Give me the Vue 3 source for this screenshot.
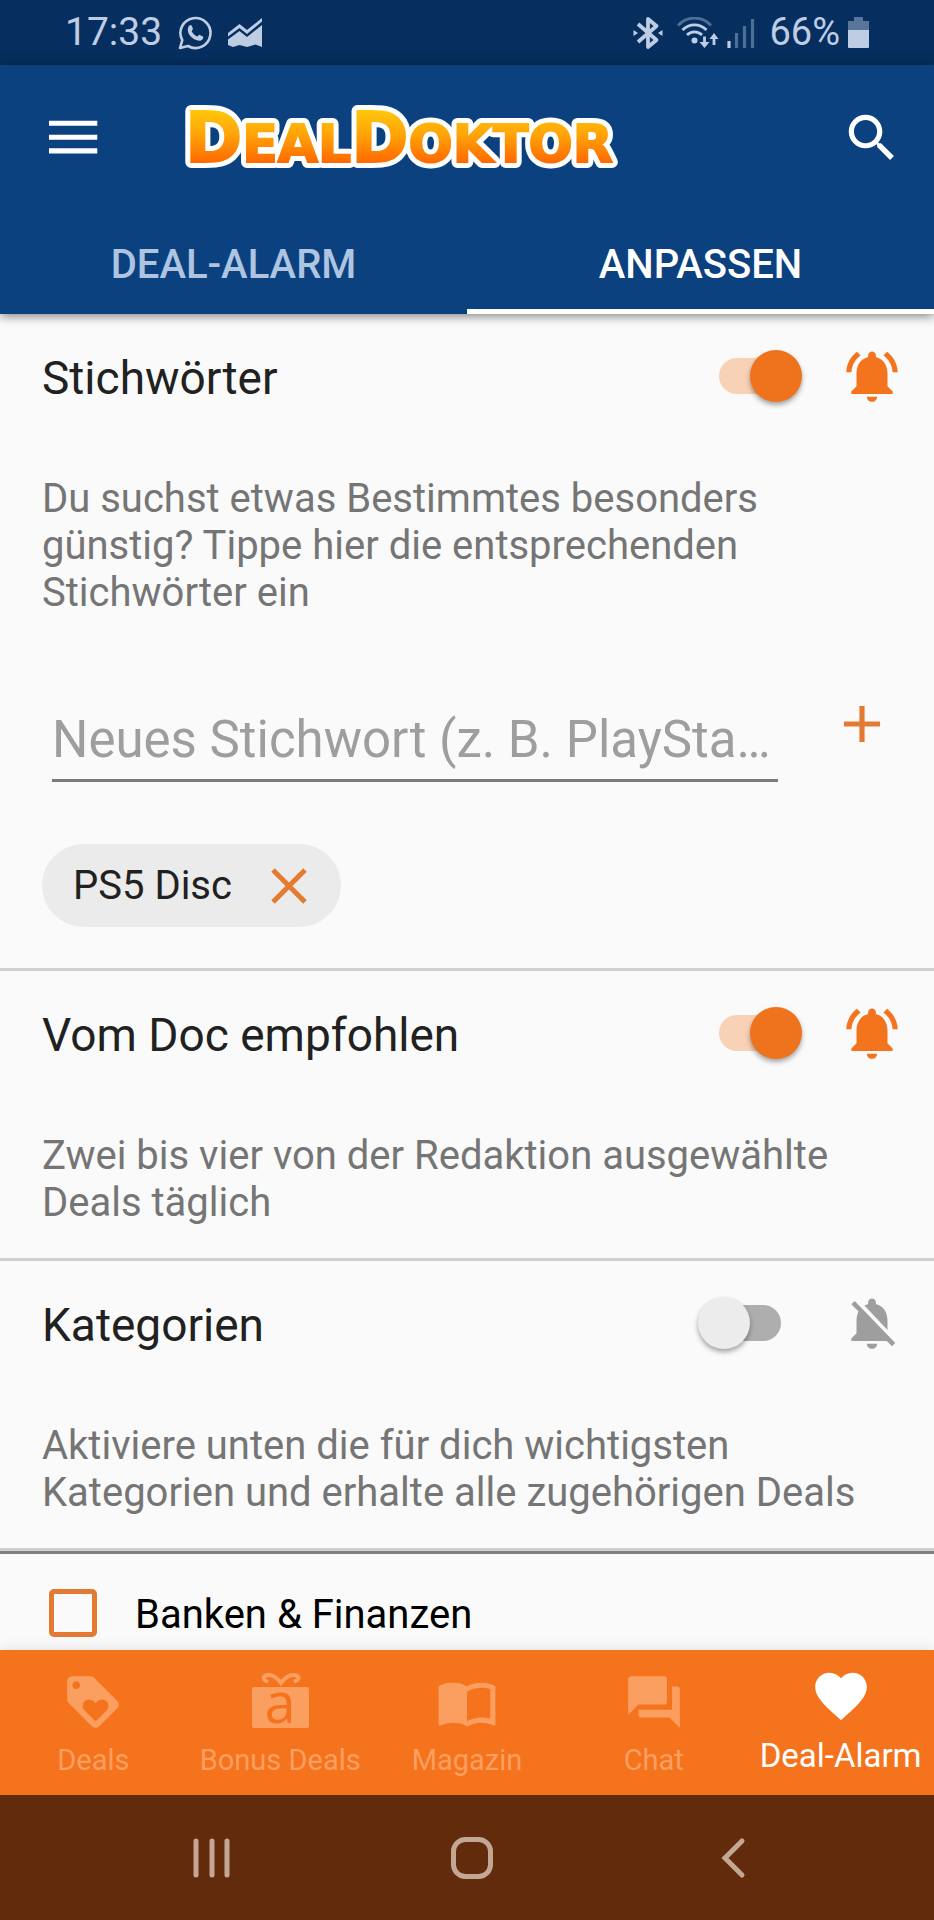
<script setup>
import { ref } from 'vue'

const keyword = ref('')
const tabs = ref([
  { label: 'DEAL-ALARM', active: false },
  { label: 'ANPASSEN', active: true }
])
const keywordsOn = ref(true)
const docOn = ref(true)
const categoriesOn = ref(false)
const finance = ref(false)

const bellOn =
  'M7.58 4.08L6.15 2.65C3.75 4.48 2.17 7.3 2.03 10.5h2c.15-2.65 1.51-4.97 3.55-6.42zm12.39 6.42h2c-.15-3.2-1.73-6.02-4.12-7.85l-1.42 1.43c2.02 1.45 3.39 3.77 3.54 6.42zM18 11c0-3.07-1.64-5.64-4.5-6.32V4c0-.83-.67-1.5-1.5-1.5s-1.5.67-1.5 1.5v.68C7.63 5.36 6 7.92 6 11v5l-2 2v1h16v-1l-2-2v-5zm-6 11c.14 0 .27-.01.4-.04.65-.14 1.18-.58 1.44-1.18.1-.24.15-.5.15-.78h-4c.01 1.1.9 2 2.01 2z'
const bellOff =
  'M20 18.69L7.84 6.14 5.27 3.49 4 4.76l2.8 2.8v.01c-.52.99-.8 2.16-.8 3.42v5l-2 2v1h13.73l2 2L21 19.72l-1-1.03zM12 22c1.11 0 2-.89 2-2h-4c0 1.11.89 2 2 2zm6-7.32V11c0-3.08-1.64-5.64-4.5-6.32V4c0-.83-.67-1.5-1.5-1.5s-1.5.67-1.5 1.5v.68c-.15.03-.29.08-.42.12-.1.03-.2.07-.3.11h-.01c-.01 0-.01 0-.02.01-.23.09-.46.2-.68.31 0 0-.01 0-.01.01L18 14.68z'
</script>

<template>
  <div class="screen">
    <div class="status">
      <div class="status-group">
        <span class="clock">17:33</span>
        <svg class="ic-wa" viewBox="0 0 34 34" aria-hidden="true">
          <path d="M2 32 L4.300 24.200 A15 15 0 1 1 10 30 Z" fill="none" stroke="currentColor" stroke-width="2.600" stroke-linejoin="round" />
          <path d="M11.400 9.500c.8-.8 1.900-.7 2.300.2l1.200 2.900c.3.800-1.200 2-1.200 2.600.9 2.100 3 4.200 5.400 5.300.7.2 1.800-1.900 2.700-1.600l3 1.500c.7.400.5 1.700 0 2.500-1 1.600-3.100 2-4.900 1.600-5-1.200-9.200-5.200-10-9.600-.3-2 .3-4.200 1.500-5.400z" fill="currentColor" />
        </svg>
        <svg class="ic-chart" viewBox="0 0 34 30" aria-hidden="true">
          <path d="M0 15 L11.500 6 L19 12 L34 0 V3.500 L19 16 L11.500 10 L0 18.500 Z" fill="currentColor" />
          <path d="M0 21.500 L11.500 13 L19 19 L34 7 V29 L27.500 26.500 L19 29 L11.500 27 L5 29 L0 27 Z" fill="currentColor" />
        </svg>
      </div>
      <div class="status-group right">
        <svg class="ic-bt" viewBox="0 0 30 34" aria-hidden="true">
          <path d="M5 8 L23.500 24 L15 31 V3 L23.500 10 L5 26" fill="none" stroke="currentColor" stroke-width="3.800" stroke-linejoin="round" />
          <path d="M0.500 14 L5 17 L0.500 20 Z M29.500 14 L25 17 L29.500 20 Z" fill="currentColor" />
        </svg>
        <svg class="ic-wifi" viewBox="0 0 42 32" aria-hidden="true">
          <g fill="none" stroke="currentColor" stroke-width="2.800">
            <path d="M1 8.500 A22 22 0 0 1 34 8.500" opacity=".4" />
            <path d="M5.500 13 A16.500 16.500 0 0 1 29.500 13" />
            <path d="M10 18 A10.500 10.500 0 0 1 25 18" />
            <path d="M27.500 19.500 V28 M37 28 V20" />
          </g>
          <circle cx="17.500" cy="23.500" r="3" fill="currentColor" />
          <path d="M22.500 25 H32.500 L27.500 31 Z M32.500 22 H41.500 L37 16 Z" fill="currentColor" />
        </svg>
        <svg class="ic-signal" viewBox="0 0 28 30" aria-hidden="true">
          <g fill="none" stroke="currentColor" stroke-width="3.200">
            <path d="M2 23 V30" />
            <path d="M9.500 15 V30 M17.500 8 V30 M25.500 1 V30" opacity=".4" />
          </g>
        </svg>
        <span class="percent">66%</span>
        <svg class="ic-battery" viewBox="0 0 21 31" aria-hidden="true">
          <path d="M6 0 H15 V4 H21 V13 H0 V4 H6 Z" fill="currentColor" opacity=".45" />
          <path d="M0 13 H21 V30 Q21 31 20 31 H1 Q0 31 0 30 Z" fill="currentColor" />
        </svg>
      </div>
    </div>

    <header class="appbar">
      <div class="toolbar">
        <button class="icon-btn" type="button" aria-label="Menü">
          <svg viewBox="0 0 24 24"><path d="M2.700 18h18.700v-2H2.700v2zm0-5.300h18.700v-2H2.700v2zm0-7.400v2h18.700v-2H2.700z" fill="currentColor" /></svg>
        </button>
        <svg class="logo" viewBox="0 0 448 96" role="img" aria-label="DealDoktor">
          <defs>
            <linearGradient id="logo-fill" gradientUnits="userSpaceOnUse" x1="0" y1="21" x2="0" y2="73">
              <stop offset="0" stop-color="#ffc60a" />
              <stop offset=".45" stop-color="#ffa408" />
              <stop offset="1" stop-color="#ff6800" />
            </linearGradient>
          </defs>
          <text class="logo-text logo-edge" x="2" y="72">D<tspan class="logo-small">EAL</tspan>D<tspan class="logo-small">OKTOR</tspan></text>
          <text class="logo-text logo-face" x="2" y="72" aria-hidden="true">D<tspan class="logo-small">EAL</tspan>D<tspan class="logo-small">OKTOR</tspan></text>
        </svg>
        <button class="icon-btn" type="button" aria-label="Suchen">
          <svg viewBox="0 0 24 24"><path d="M15.500 14h-.79l-.28-.27C15.410 12.590 16 11.110 16 9.500 16 5.910 13.090 3 9.500 3S3 5.910 3 9.500 5.910 16 9.500 16c1.610 0 3.090-.59 4.230-1.570l.27.28v.79l5 4.990L20.490 19l-4.990-5zm-6 0C7.010 14 5 11.990 5 9.500S7.010 5 9.500 5 14 7.010 14 9.500 11.990 14 9.500 14z" fill="currentColor" /></svg>
        </button>
      </div>
      <nav class="tabs">
        <button v-for="t in tabs" :key="t.label" type="button" class="tab" :class="{ active: t.active }">{{ t.label }}</button>
      </nav>
    </header>

    <main class="content">
      <section class="section">
        <div class="head">
          <h2 id="t-keywords">Stichwörter</h2>
          <input v-model="keywordsOn" class="switch" type="checkbox" role="switch" aria-labelledby="t-keywords" />
          <svg class="bell on" viewBox="0 0 24 24" aria-hidden="true"><path :d="bellOn" fill="currentColor" /></svg>
        </div>
        <p class="desc">Du suchst etwas Bestimmtes besonders günstig? Tippe hier die entsprechenden Stichwörter ein</p>
        <div class="entry">
          <input v-model="keyword" class="field" type="text" aria-label="Neues Stichwort" placeholder="Neues Stichwort (z. B. PlaySta…" />
          <button class="icon-btn add" type="button" aria-label="Hinzufügen">
            <svg viewBox="0 0 24 24"><path d="M19 13h-6v6h-2v-6H5v-2h6V5h2v6h6v2z" fill="currentColor" /></svg>
          </button>
        </div>
        <div class="chips">
          <div class="chip">
            <span>PS5 Disc</span>
            <button class="remove" type="button" aria-label="PS5 Disc entfernen">
              <svg viewBox="0 0 36 36"><path d="M2 2 L34 34 M34 2 L2 34" stroke="currentColor" stroke-width="5" /></svg>
            </button>
          </div>
        </div>
      </section>

      <section class="section">
        <div class="head">
          <h2 id="t-doc">Vom Doc empfohlen</h2>
          <input v-model="docOn" class="switch" type="checkbox" role="switch" aria-labelledby="t-doc" />
          <svg class="bell on" viewBox="0 0 24 24" aria-hidden="true"><path :d="bellOn" fill="currentColor" /></svg>
        </div>
        <p class="desc">Zwei bis vier von der Redaktion ausgewählte Deals täglich</p>
      </section>

      <section class="section">
        <div class="head">
          <h2 id="t-cat">Kategorien</h2>
          <input v-model="categoriesOn" class="switch" type="checkbox" role="switch" aria-labelledby="t-cat" />
          <svg class="bell" viewBox="0 0 24 24" aria-hidden="true"><path :d="bellOff" fill="currentColor" /></svg>
        </div>
        <p class="desc">Aktiviere unten die für dich wichtigsten Kategorien und erhalte alle zugehörigen Deals</p>
      </section>

      <label class="option">
        <input v-model="finance" type="checkbox" class="box" />
        <span>Banken &amp; Finanzen</span>
      </label>
    </main>

    <nav class="bottom">
      <a href="#deals" class="item">
        <svg viewBox="0 0 24 24" aria-hidden="true"><path d="M21.410 11.580l-9-9C12.050 2.220 11.550 2 11 2H4c-1.100 0-2 .9-2 2v7c0 .55.22 1.050.59 1.420l9 9c.36.36.86.58 1.410.58.55 0 1.050-.22 1.410-.59l7-7c.37-.36.59-.86.59-1.410 0-.55-.23-1.060-.59-1.420zM5.500 7C4.670 7 4 6.330 4 5.500S4.670 4 5.500 4 7 4.670 7 5.500 6.330 7 5.500 7zm11.770 8.270L13 19.540l-4.270-4.270C8.280 14.810 8 14.190 8 13.500c0-1.380 1.120-2.500 2.500-2.500.69 0 1.320.28 1.770.74l.73.72.73-.73c.45-.45 1.080-.73 1.770-.73 1.380 0 2.500 1.120 2.500 2.500 0 .69-.28 1.320-.73 1.770z" fill="currentColor" /></svg>
        <span>Deals</span>
      </a>
      <a href="#bonus" class="item">
        <svg class="gift" viewBox="0 0 62 62" aria-hidden="true">
          <path d="M5 16 H58 Q60 16 60 18 V55 Q60 57 58 57 H5 Q3 57 3 55 V18 Q3 16 5 16 Z" fill="currentColor" />
          <path d="M19 11 C12 8 14 4 20 4 C25 4 29 8 32 12 C35 8 39 4 44 4 C50 4 52 8 45 11" fill="none" stroke="currentColor" stroke-width="4" />
          <text class="glyph" x="31" y="52" text-anchor="middle">a</text>
        </svg>
        <span>Bonus Deals</span>
      </a>
      <a href="#magazin" class="item">
        <svg viewBox="0 0 24 24" aria-hidden="true"><path d="M21 5c-1.110-.35-2.330-.5-3.500-.5-1.950 0-4.050.4-5.500 1.500-1.450-1.100-3.550-1.500-5.500-1.500S2.450 4.900 1 6v14.650c0 .25.25.5.5.5.1 0 .15-.05.25-.05C3.100 20.450 5.050 20 6.500 20c1.950 0 4.050.4 5.500 1.500 1.350-.85 3.800-1.500 5.500-1.500 1.650 0 3.350.3 4.750 1.050.1.050.15.050.25.050.25 0 .5-.25.5-.5V6c-.6-.45-1.250-.75-2-1zm0 13.500c-1.100-.35-2.300-.5-3.500-.5-1.700 0-4.150.65-5.500 1.500V8c1.350-.85 3.800-1.500 5.500-1.500 1.200 0 2.400.15 3.500.5v11.500z" fill="currentColor" /></svg>
        <span>Magazin</span>
      </a>
      <a href="#chat" class="item">
        <svg viewBox="0 0 24 24" aria-hidden="true"><path d="M21 6h-2v9H6v2c0 .55.45 1 1 1h11l4 4V7c0-.55-.45-1-1-1zm-4 6V3c0-.55-.45-1-1-1H3c-.55 0-1 .45-1 1v14l4-4h10c.55 0 1-.45 1-1z" fill="currentColor" /></svg>
        <span>Chat</span>
      </a>
      <a href="#alarm" class="item current" aria-current="page">
        <svg viewBox="0 0 24 24" aria-hidden="true"><path d="M12 21.350l-1.450-1.320C5.400 15.360 2 12.280 2 8.500 2 5.420 4.420 3 7.500 3c1.740 0 3.410.81 4.500 2.090C13.090 3.810 14.760 3 16.500 3 19.580 3 22 5.420 22 8.500c0 3.780-3.400 6.860-8.550 11.540L12 21.350z" fill="currentColor" /></svg>
        <span>Deal-Alarm</span>
      </a>
    </nav>

    <div class="system">
      <button type="button" aria-label="Letzte Apps">
        <svg viewBox="0 0 42 42"><path d="M4 4 V38 M20 4 V38 M35 4 V38" stroke="currentColor" stroke-width="5" stroke-linecap="round" /></svg>
      </button>
      <button type="button" aria-label="Startseite">
        <svg viewBox="0 0 42 42"><rect x="2.500" y="2.500" width="37" height="37" rx="12" fill="none" stroke="currentColor" stroke-width="5" /></svg>
      </button>
      <button type="button" aria-label="Zurück">
        <svg viewBox="0 0 42 42"><path d="M32 4 L15 21 L32 38" fill="none" stroke="currentColor" stroke-width="5" stroke-linecap="round" /></svg>
      </button>
    </div>
  </div>
</template>

<style>
body {
  background: #fafafa;
}
</style>

<style scoped>
.screen {
  display: flex;
  flex-direction: column;
  min-height: 100vh;
  font-family: Roboto, 'Liberation Sans', sans-serif;
  font-size: 40px;
  line-height: 47px;
  background: #fafafa;
}
.screen * {
  box-sizing: border-box;
}
button {
  padding: 0;
  border: 0;
  background: none;
  font: inherit;
  color: inherit;
}
svg {
  display: block;
  flex: none;
}
.status {
  display: flex;
  justify-content: space-between;
  height: 65px;
  padding: 0 65px;
  background: #062f5f;
  color: #bfcde4;
}
.status-group {
  display: flex;
  align-items: center;
  gap: 16px;
}
.right {
  gap: 8px;
}
.clock {
  font-size: 39px;
}
.percent {
  font-size: 38px;
}
.ic-wa { width: 34px; height: 34px; }
.ic-chart { width: 34px; height: 30px; }
.ic-bt { width: 30px; height: 34px; margin-right: 6px; }
.ic-wifi { width: 42px; height: 32px; }
.ic-signal { width: 28px; height: 30px; margin-right: 6px; }
.ic-battery { width: 21px; height: 31px; }

.appbar {
  position: relative;
  background: #0c4180;
  color: #fff;
  box-shadow: 0 2px 10px rgba(0, 0, 0, 0.5);
}
.toolbar {
  display: flex;
  align-items: center;
  height: 145px;
  padding: 0 31px 0 42px;
}
.icon-btn svg {
  width: 62px;
  height: 62px;
}
.logo {
  width: 448px;
  height: 96px;
  margin: 0 auto 0 79px;
}
.logo-text {
  font-family: 'DejaVu Sans', sans-serif;
  font-weight: 700;
  font-size: 69px;
}
.logo-small {
  font-size: 52px;
}
.logo-edge {
  fill: #fff;
  stroke: #fff;
  stroke-width: 12px;
  stroke-linejoin: round;
}
.logo-face {
  fill: url(#logo-fill);
  stroke: url(#logo-fill);
  stroke-width: 2px;
}
.tabs {
  display: grid;
  grid-template-columns: 1fr 1fr;
}
.tab {
  height: 104px;
  padding-top: 9px;
  border-bottom: 5px solid transparent;
  font-weight: 500;
  color: #afc4e0;
}
.tab.active {
  color: #fff;
  border-color: #fff;
}

.content {
  flex: 1;
}
.section {
  padding: 0 31px 32px 42px;
  border-bottom: 3px solid #d0d0d0;
}
.head {
  display: flex;
  align-items: center;
  height: 124px;
}
h2 {
  flex: 1;
  margin: 0;
  padding-top: 4px;
  font-size: 46px;
  font-weight: 400;
  line-height: 54px;
  color: #212121;
}
.switch {
  appearance: none;
  position: relative;
  width: 104px;
  height: 52px;
  margin: 0 39px 0 0;
}
.switch::before {
  content: '';
  position: absolute;
  inset: 8px 21px;
  border-radius: 18px;
  background: #aeaeae;
}
.switch::after {
  content: '';
  position: absolute;
  top: 0;
  left: 0;
  width: 52px;
  height: 52px;
  border-radius: 50%;
  background: #ececec;
  box-shadow: 0 3px 5px rgba(0, 0, 0, 0.35);
}
.switch:checked::before {
  background: #f9d1b6;
}
.switch:checked::after {
  left: auto;
  right: 0;
  background: #ef721c;
}
.bell {
  width: 62px;
  height: 62px;
  color: #9e9e9e;
}
.on {
  color: #f4731d;
}
.desc {
  margin: 37px 0 0;
  color: #757575;
}
.entry {
  display: flex;
  align-items: flex-start;
  gap: 53px;
  margin: 77px 10px 62px;
}
.field {
  flex: 1;
  min-width: 0;
  height: 89px;
  padding: 6px 0 0;
  border: 0;
  border-bottom: 3px solid #7c7c7c;
  border-radius: 0;
  background: none;
  font: inherit;
  font-size: 51px;
  color: #212121;
}
.field::placeholder {
  color: #9e9e9e;
  opacity: 1;
}
.add {
  color: #e37a33;
}
.chips {
  display: flex;
  padding-bottom: 9px;
}
.chip {
  display: flex;
  align-items: center;
  gap: 39px;
  height: 83px;
  padding: 0 34px 0 31px;
  border-radius: 42px;
  background: #ebebeb;
  color: #212121;
}
.remove {
  color: #e67a30;
}
.remove svg {
  width: 36px;
  height: 36px;
}
.option {
  display: flex;
  align-items: center;
  gap: 38px;
  padding: 34px 49px 12px;
  border-top: 3px solid #808080;
  color: #000;
}
.option span {
  padding-top: 3px;
}
.box {
  appearance: none;
  width: 48px;
  height: 48px;
  margin: 0;
  border: 5px solid #e37a33;
  border-radius: 5px;
}

.bottom {
  display: grid;
  grid-template-columns: repeat(5, 1fr);
  height: 145px;
  background: #f5731d;
  box-shadow: 0 0 14px rgba(0, 0, 0, 0.12);
}
.item {
  display: flex;
  flex-direction: column;
  align-items: center;
  gap: 10px;
  padding-top: 21px;
  font-size: 29px;
  line-height: 34px;
  white-space: nowrap;
  text-decoration: none;
  color: #fb9f60;
}
.item svg {
  width: 62px;
  height: 62px;
}
.item.current {
  gap: 12px;
  padding-top: 15px;
  font-size: 33px;
  color: #fff;
}
.gift {
  overflow: visible;
}
.glyph {
  font-family: 'Open Sans', 'Noto Sans', sans-serif;
  font-size: 56px;
  font-weight: 500;
  fill: #f5731d;
}
.system {
  display: flex;
  align-items: center;
  justify-content: center;
  height: 125px;
  padding-left: 10px;
  background: #622c0c;
  color: #c4a695;
}
.system button {
  display: flex;
  justify-content: center;
  width: 28%;
}
.system svg {
  width: 42px;
  height: 42px;
}
</style>
